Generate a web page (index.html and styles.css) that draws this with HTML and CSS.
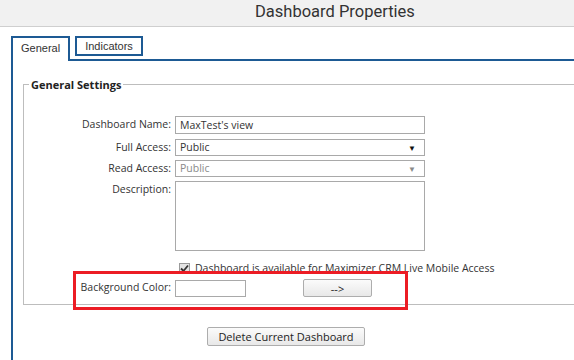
FILE: index.html
```html
<!DOCTYPE html>
<html lang="en">
<head>
    <meta charset="UTF-8">
    <title>Dashboard Properties</title>
    <link rel="stylesheet" href="styles.css">
</head>
<body>
    <div class="titlebar">
        <h1>Dashboard Properties</h1>
    </div>

    <div class="tabs">
        <span class="tab active">General</span>
        <span class="tab">Indicators</span>
    </div>

    <div class="panel">
        <fieldset class="settings">
            <legend>General Settings</legend>
            <div class="form-grid">
                <label for="dashname">Dashboard Name:</label>
                <input id="dashname" class="field" type="text" value="MaxTest's view">

                <label>Full Access:</label>
                <div class="field select">
                    <span>Public</span>
                    <span class="arrow">&#9660;</span>
                </div>

                <label>Read Access:</label>
                <div class="field select disabled">
                    <span>Public</span>
                    <span class="arrow">&#9660;</span>
                </div>

                <label for="desc">Description:</label>
                <textarea id="desc" class="field area"></textarea>

                <div class="check-row">
                    <span class="checkbox">
                        <svg width="9" height="9" viewBox="0 0 9 9"><path d="M1 4.5 L3.5 7 L8 1.5" fill="none" stroke="#333" stroke-width="1.8"/></svg>
                    </span>
                    <span class="check-label">Dashboard is available for Maximizer CRM Live Mobile Access</span>
                </div>

                <label for="bgcolor">Background Color:</label>
                <div class="color-row">
                    <input id="bgcolor" class="field color" type="text">
                    <button class="btn arrow-btn" type="button">--&gt;</button>
                </div>
            </div>
        </fieldset>

        <div class="actions">
            <button class="btn" type="button">Delete Current Dashboard</button>
        </div>
    </div>

    <!-- annotation box -->
    <div class="highlight"></div>
</body>
</html>
```

FILE: styles.css
```css
html, body {
    margin: 0;
    overflow: hidden;
    background: #fff;
}

body {
    font-family: "Open Sans", "Noto Sans", sans-serif;
    font-size: 10.5px;
    color: #333;
    height: 360px;
    position: relative;
}

/******************* title *******************/

.titlebar {
    height: 26px;
    background: #f1f1f1;
    border-bottom: 1px solid #cfcfcf;
}

.titlebar h1 {
    margin: 0;
    padding-left: 255px;
    font: 400 16.5px/24px Roboto, "Liberation Sans", sans-serif;
    color: #333;
}

/******************* tabs *******************/

.tabs {
    display: flex;
    align-items: flex-start;
    gap: 5px;
    margin-left: 11px;
    padding-top: 9px;
    height: 23px;
}

.tab {
    border: 2px solid #1d5a94;
    padding: 0 8px;
    height: 16px;
    font: 11px/16px "Liberation Sans", Arial, sans-serif;
    color: #333;
    background: #fff;
}

.tab.active {
    position: relative;
    z-index: 1;
    height: 23px;
    border-bottom: none;
    line-height: 20px;
}

/******************* panel *******************/

.panel {
    margin-left: 11px;
    border-top: 2px solid #1d5a94;
    border-left: 2px solid #1d5a94;
    height: 300px;
}

.settings {
    margin: 16px 0 0 10px;
    padding: 0 0 7px 0;
    border: 1px solid #bdbdbd;
    border-right: none;
}

.settings legend {
    margin-left: 5px;
    padding: 0 2px;
    font-size: 11px;
    font-weight: bold;
    line-height: 15px;
    color: #222;
}

.form-grid {
    display: grid;
    grid-template-columns: 147px 250px;
    column-gap: 4px;
    row-gap: 4px;
    padding-top: 24px;
}

.form-grid label {
    text-align: right;
    line-height: 17px;
}

.field {
    box-sizing: border-box;
    margin: 0;
    border: 1px solid #a9a9a9;
    background: #fff;
    font: inherit;
    color: #333;
    height: 17px;
    padding: 0 4px;
}

#dashname {
    height: 18px;
    margin-bottom: 1px;
}

.select {
    display: flex;
    justify-content: space-between;
    align-items: center;
    line-height: 15px;
}

.select .arrow {
    font-size: 8px;
    margin-right: 4px;
    color: #111;
}

.select.disabled {
    color: #8a8a8a;
}

.select.disabled .arrow {
    color: #8a8a8a;
}

.area {
    height: 70px;
    resize: none;
}

.check-row {
    grid-column: 2;
    display: flex;
    align-items: center;
    gap: 5px;
    padding-left: 4px;
    margin-top: 6px;
    height: 14px;
    white-space: nowrap;
}

.checkbox {
    box-sizing: border-box;
    flex: none;
    width: 11px;
    height: 11px;
    border: 1px solid #9a9a9a;
    background: #e4e4e4;
    display: flex;
    align-items: center;
    justify-content: center;
}

.color-row {
    display: flex;
    align-items: center;
}

.color {
    width: 71px;
    height: 17px;
}

.btn {
    box-sizing: border-box;
    border: 1px solid #adadad;
    border-radius: 2px;
    background: linear-gradient(#fbfbfb, #e8e8e8);
    font: inherit;
    font-size: 11px;
    color: #222;
    padding: 0;
}

.arrow-btn {
    margin-left: 57px;
    width: 69px;
    height: 18px;
}

/******************* actions *******************/

.actions {
    display: flex;
    justify-content: center;
    padding-right: 15px;
    margin-top: 22px;
}

.actions .btn {
    width: 158px;
    height: 19px;
}

/* red annotation frame */
.highlight {
    position: absolute;
    left: 73px;
    top: 271px;
    width: 335px;
    height: 39px;
    box-sizing: border-box;
    border: 3px solid #ec1c24;
}
```
